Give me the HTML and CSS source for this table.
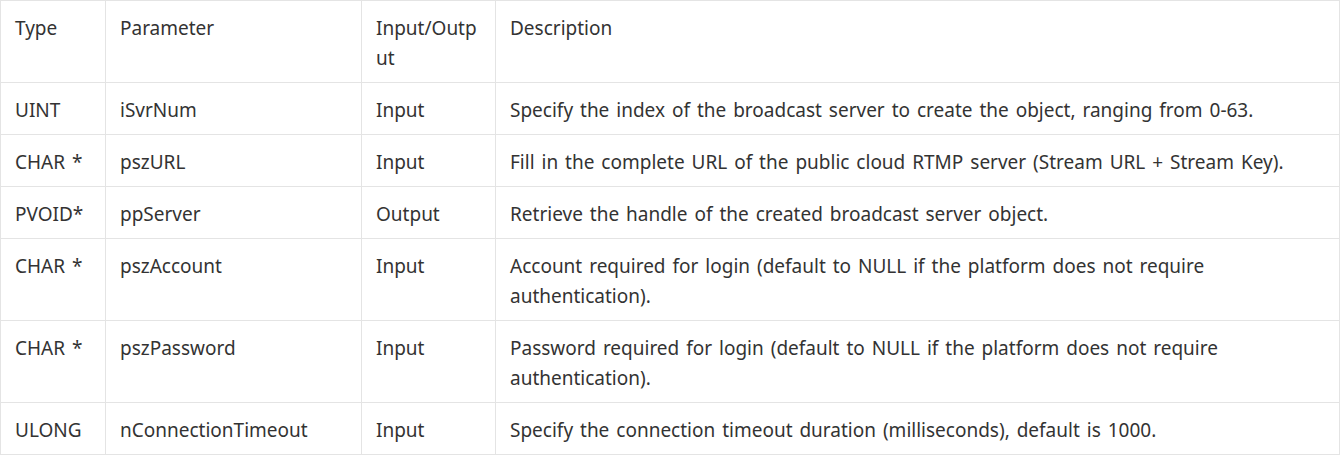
FILE: index.html
```html
<!DOCTYPE html>
<html lang="en">
<head>
    <meta charset="UTF-8">
    <title>Parameters</title>
    <link rel="stylesheet" href="styles.css">
</head>
<body>
    <table class="params">
        <colgroup>
            <col class="col-type">
            <col class="col-param">
            <col class="col-io">
            <col class="col-desc">
        </colgroup>
        <tr>
            <td>Type</td>
            <td>Parameter</td>
            <td>Input/Output</td>
            <td>Description</td>
        </tr>
        <tr>
            <td>UINT</td>
            <td>iSvrNum</td>
            <td>Input</td>
            <td>Specify the index of the broadcast server to create the object, ranging from 0-63.</td>
        </tr>
        <tr>
            <td>CHAR *</td>
            <td>pszURL</td>
            <td>Input</td>
            <td>Fill in the complete URL of the public cloud RTMP server (Stream URL + Stream Key).</td>
        </tr>
        <tr>
            <td>PVOID*</td>
            <td>ppServer</td>
            <td>Output</td>
            <td>Retrieve the handle of the created broadcast server object.</td>
        </tr>
        <tr>
            <td>CHAR *</td>
            <td>pszAccount</td>
            <td>Input</td>
            <td>Account required for login (default to NULL if the platform does not require authentication).</td>
        </tr>
        <tr>
            <td>CHAR *</td>
            <td>pszPassword</td>
            <td>Input</td>
            <td>Password required for login (default to NULL if the platform does not require authentication).</td>
        </tr>
        <tr>
            <td>ULONG</td>
            <td>nConnectionTimeout</td>
            <td>Input</td>
            <td>Specify the connection timeout duration (milliseconds), default is 1000.</td>
        </tr>
    </table>
</body>
</html>
```

FILE: styles.css
```css
body {
    margin: 0;
    background-color: white;
    color: #333;
    font-family: "Noto Sans", "Open Sans", sans-serif;
    font-size: 19px;
    word-spacing: 2px;
}

.params {
    width: 1340px;
    border-collapse: collapse;
    table-layout: fixed;
}

.col-type { width: 105px; }
.col-param { width: 256px; }
.col-io { width: 134px; }

.params td {
    border: 1px solid #e4e4e4;
    padding: 12px 14px 9px;
    line-height: 30px;
    vertical-align: top;
    word-wrap: break-word;
}
```
